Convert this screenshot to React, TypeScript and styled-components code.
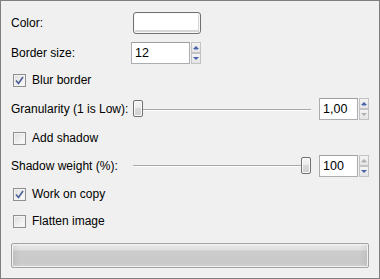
import React from 'react';
import styled, { createGlobalStyle } from 'styled-components';

const GlobalStyle = createGlobalStyle`
  html, body {
    margin: 0;
    padding: 0;
    background: #f0f0f0;
  }
  body {
    font-family: "Liberation Sans", Arial, sans-serif;
    font-size: 12px;
    color: #000;
  }
`;

const Panel = styled.div`
  box-sizing: border-box;
  width: 380px;
  height: 279px;
  border: 1px solid #7f7f7f;
  background: #f0f0f0;
  padding: 11px 10px 0 10px;
  display: flex;
  flex-direction: column;
`;

const Row = styled.div<{ $mt: number; $h?: number }>`
  display: flex;
  align-items: center;
  height: ${({ $h }) => $h ?? 22}px;
  margin-top: ${({ $mt }) => $mt}px;
`;

const Label = styled.span<{ $w?: number }>`
  width: ${({ $w }) => $w ?? 120}px;
  flex: none;
  white-space: nowrap;
`;

const ColorButton = styled.div`
  box-sizing: border-box;
  width: 68px;
  height: 22px;
  margin-left: 1px;
  border: 1px solid #707070;
  border-radius: 3px;
  background: #fff;
  box-shadow: inset 0 0 0 1px #f8f8f8, inset -1px -2px 0 1px #d6d6d6;
`;

const Spin = styled.div`
  display: flex;
  height: 22px;
`;

const SpinInput = styled.div<{ $w: number }>`
  box-sizing: border-box;
  width: ${({ $w }) => $w}px;
  height: 22px;
  border: 1px solid #abadb3;
  border-top-color: #a0a0a0;
  background: #fff;
  padding-left: 3px;
  display: flex;
  align-items: center;
  font-size: 12.5px;
`;

const SpinButtons = styled.div`
  display: flex;
  flex-direction: column;
  margin-left: 1px;
  width: 10px;
`;

const SpinButton = styled.div`
  box-sizing: border-box;
  width: 10px;
  height: 11px;
  border: 1px solid #c3c3c3;
  background: linear-gradient(#f4f4f4, #e4e4e4);
  display: flex;
  align-items: center;
  justify-content: center;
`;

const Arrow = styled.span<{ $dir: 'up' | 'down'; $on: boolean }>`
  width: 0;
  height: 0;
  border-left: 3px solid transparent;
  border-right: 3px solid transparent;
  ${({ $dir, $on }) =>
    $dir === 'up'
      ? `border-bottom: 3px solid ${$on ? '#4a62a8' : '#b0b0b0'}; box-shadow: 0 2px 0 -1px ${$on ? '#9fb0d8' : '#d0d0d0'};`
      : `border-top: 3px solid ${$on ? '#4a62a8' : '#b0b0b0'};`}
`;

const CheckRow = styled.label`
  display: flex;
  align-items: center;
  gap: 6px;
  padding-left: 2px;
`;

const Box = styled.span`
  box-sizing: border-box;
  width: 13px;
  height: 13px;
  border: 1px solid #8f8f8f;
  background: linear-gradient(135deg, #dcdcdc, #fdfdfd);
  box-shadow: inset 0 0 0 1px #f4f4f4;
  display: flex;
  align-items: center;
  justify-content: center;
`;

const Slider = styled.div`
  position: relative;
  width: 178px;
  height: 22px;
  margin-left: 2px;
  margin-right: 8px;
  display: flex;
  align-items: center;
`;

const Track = styled.div`
  width: 100%;
  height: 1px;
  background: #a9a9a9;
  box-shadow: 0 1px 0 #fcfcfc;
`;

const Thumb = styled.div`
  position: absolute;
  top: 2px;
  width: 10px;
  height: 17px;
  box-sizing: border-box;
  border: 1px solid #707070;
  border-radius: 2px;
  background: linear-gradient(#f6f6f6, #ececec 45%, #d9d9d9 50%, #d0d0d0);
  box-shadow: inset 0 0 0 1px #fafafa;
`;

const Progress = styled.div`
  box-sizing: border-box;
  width: 358px;
  height: 25px;
  margin-top: 11px;
  margin-left: 0;
  border: 1px solid #a3a3a3;
  border-radius: 2px;
  background:
    linear-gradient(90deg, rgba(0,0,0,0.06), rgba(0,0,0,0) 8px, rgba(0,0,0,0) calc(100% - 8px), rgba(0,0,0,0.06)),
    linear-gradient(#f4f4f4, #e6e6e6 2px, #dedede 6px, #cccccc 7px, #c9c9c9 80%, #d2d2d2);
  box-shadow: inset 0 0 0 1px #f2f2f2;
`;

const Check = () => (
  <svg width="9" height="9" viewBox="0 0 9 9">
    <path d="M1 4.5 L3.5 7.5 L8 1" fill="none" stroke="#4a5f97" strokeWidth="1.6" />
  </svg>
);

const CheckBox: React.FC<{ checked?: boolean; label: string }> = ({ checked, label }) => (
  <CheckRow>
    <Box>{checked && <Check />}</Box>
    <span>{label}</span>
  </CheckRow>
);

const SpinBox: React.FC<{ value: string; w: number; up: boolean; down: boolean }> = ({ value, w, up, down }) => (
  <Spin>
    <SpinInput $w={w}>{value}</SpinInput>
    <SpinButtons>
      <SpinButton>
        <Arrow $dir="up" $on={up} />
      </SpinButton>
      <SpinButton>
        <Arrow $dir="down" $on={down} />
      </SpinButton>
    </SpinButtons>
  </Spin>
);

const SliderControl: React.FC<{ pos: number }> = ({ pos }) => (
  <Slider>
    <Track />
    <Thumb style={{ left: `${pos * 168}px` }} />
  </Slider>
);

export default function App() {
  return (
    <>
      <GlobalStyle />
      <Panel>
        <Row $mt={0}>
          <Label $w={121}>Color:</Label>
          <ColorButton />
        </Row>
        <Row $mt={8}>
          <Label $w={120}>Border size:</Label>
          <SpinBox value="12" w={59} up down />
        </Row>
        <Row $mt={5}>
          <CheckBox checked label="Blur border" />
        </Row>
        <Row $mt={7}>
          <Label $w={120}>Granularity (1 is Low):</Label>
          <SliderControl pos={0} />
          <SpinBox value="1,00" w={39} up down={false} />
        </Row>
        <Row $mt={7}>
          <CheckBox label="Add shadow" />
        </Row>
        <Row $mt={5} $h={23}>
          <Label $w={120}>Shadow weight (%):</Label>
          <SliderControl pos={1} />
          <SpinBox value="100" w={39} up={false} down />
        </Row>
        <Row $mt={6}>
          <CheckBox checked label="Work on copy" />
        </Row>
        <Row $mt={5}>
          <CheckBox label="Flatten image" />
        </Row>
        <Progress />
      </Panel>
    </>
  );
}
